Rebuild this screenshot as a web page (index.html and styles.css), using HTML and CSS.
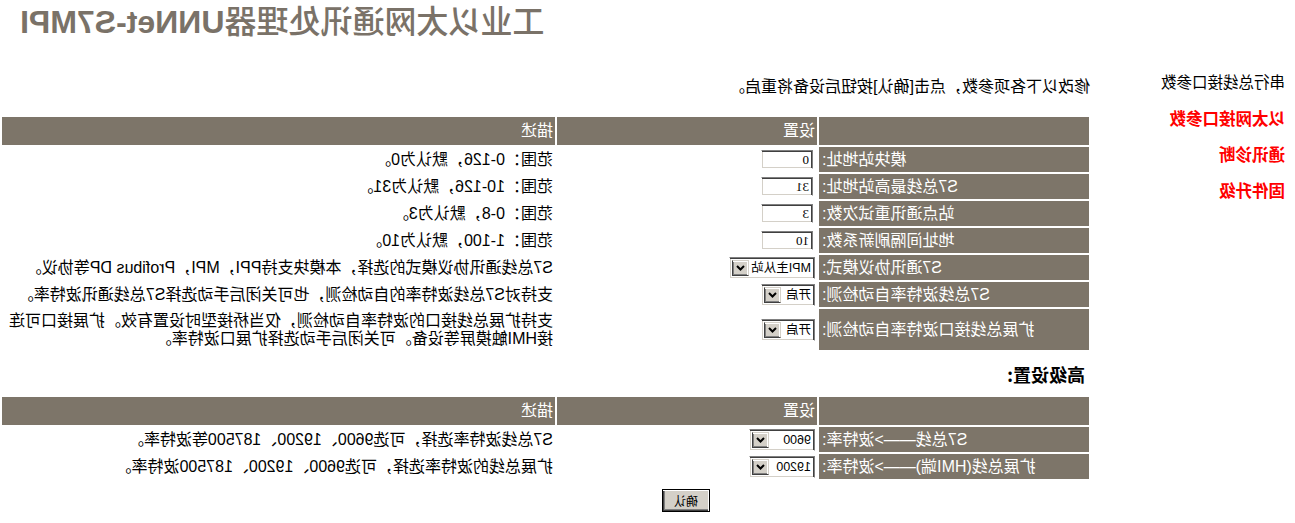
FILE: index.html
```html
<!DOCTYPE html>
<html lang="zh-CN">
<head>
<meta charset="utf-8">
<title>工业以太网通讯处理器UNNet-S7MPI</title>
<link rel="stylesheet" href="styles.css">
</head>
<body>
<div class="page">
  <header class="top">
    <h1 class="title"><span class="title-cn">工业以太网通讯处理器</span>UNNet-S7MPI</h1>
  </header>
  <div class="main">
    <nav class="side">
      <a class="side-item plain">串行总线接口参数</a>
      <a class="side-item active">以太网接口参数</a>
      <a class="side-item active">通讯诊断</a>
      <a class="side-item active">固件升级</a>
    </nav>
    <section class="content">
      <p class="intro">修改以下各项参数，点击[确认]按钮后设备将重启。</p>
      <table class="grid">
        <colgroup><col class="c-label"><col class="c-set"><col class="c-desc"></colgroup>
        <tr class="head"><th></th><th>设置</th><th>描述</th></tr>
        <tr><td class="lab">模块站地址:</td><td class="set"><input class="txt" value="0"></td><td class="desc">范围：0-126，默认为0。</td></tr>
        <tr><td class="lab">S7总线最高站地址:</td><td class="set"><input class="txt" value="31"></td><td class="desc">范围：10-126，默认为31。</td></tr>
        <tr><td class="lab">站点通讯重试次数:</td><td class="set"><input class="txt" value="3"></td><td class="desc">范围：0-8，默认为3。</td></tr>
        <tr><td class="lab">地址间隔刷新系数:</td><td class="set"><input class="txt" value="10"></td><td class="desc">范围：1-100，默认为10。</td></tr>
        <tr><td class="lab">S7通讯协议模式:</td><td class="set"><span class="sel w-mpi"><select><option>MPI主从站</option></select><span class="arr"><svg width="9" height="6" viewBox="0 0 9 6"><path d="M1 1 L4.5 4.5 L8 1" fill="none" stroke="#000" stroke-width="2"/></svg></span></span></td><td class="desc">S7总线通讯协议模式的选择，本模块支持PPI，MPI，Profibus DP等协议。</td></tr>
        <tr><td class="lab">S7总线波特率自动检测:</td><td class="set"><span class="sel w-on"><select><option>开启</option></select><span class="arr"><svg width="9" height="6" viewBox="0 0 9 6"><path d="M1 1 L4.5 4.5 L8 1" fill="none" stroke="#000" stroke-width="2"/></svg></span></span></td><td class="desc">支持对S7总线波特率的自动检测，也可关闭后手动选择S7总线通讯波特率。</td></tr>
        <tr class="tall"><td class="lab">扩展总线接口波特率自动检测:</td><td class="set"><span class="sel w-on"><select><option>开启</option></select><span class="arr"><svg width="9" height="6" viewBox="0 0 9 6"><path d="M1 1 L4.5 4.5 L8 1" fill="none" stroke="#000" stroke-width="2"/></svg></span></span></td><td class="desc">支持扩展总线接口的波特率自动检测，仅当桥接型时设置有效。扩展接口可连<br>接HMI触摸屏等设备。可关闭后手动选择扩展口波特率。</td></tr>
      </table>
      <h2 class="adv">高级设置:</h2>
      <table class="grid">
        <colgroup><col class="c-label"><col class="c-set"><col class="c-desc"></colgroup>
        <tr class="head"><th></th><th>设置</th><th>描述</th></tr>
        <tr><td class="lab">S7总线——&gt;波特率:</td><td class="set"><span class="sel w-baud"><select><option>9600</option></select><span class="arr"><svg width="9" height="6" viewBox="0 0 9 6"><path d="M1 1 L4.5 4.5 L8 1" fill="none" stroke="#000" stroke-width="2"/></svg></span></span></td><td class="desc">S7总线波特率选择，可选9600、19200、187500等波特率。</td></tr>
        <tr><td class="lab">扩展总线(HMI端)——&gt;波特率:</td><td class="set"><span class="sel w-baud"><select><option>19200</option></select><span class="arr"><svg width="9" height="6" viewBox="0 0 9 6"><path d="M1 1 L4.5 4.5 L8 1" fill="none" stroke="#000" stroke-width="2"/></svg></span></span></td><td class="desc">扩展总线的波特率选择，可选9600、19200、187500波特率。</td></tr>
      </table>
      <div class="actions"><button class="btn" type="button">确认</button></div>
    </section>
  </div>
</div>
</body>
</html>
```
FILE: styles.css
```css
html, body {
  margin: 0;
  padding: 0;
  background: #fff;
}
body {
  font-family: "Liberation Sans", "Noto Sans CJK SC", sans-serif;
  font-size: 16px;
  color: #000;
  overflow: hidden;
}
.page {
  width: 1295px;
  height: 523px;
  transform: scaleX(-1);
  transform-origin: center;
}
.top {
  height: 60px;
  display: flex;
  justify-content: flex-end;
  padding-right: 20px;
  box-sizing: border-box;
}
.title {
  margin: 0;
  padding-top: 2px;
  font-family: "Liberation Sans", "Noto Sans CJK SC", sans-serif;
  font-size: 32px;
  line-height: 40px;
  font-weight: bold;
  color: #7a7268;
}
.title-cn {
  font-weight: 500;
}
.main {
  display: flex;
}
.side {
  width: 204px;
  flex: none;
  box-sizing: border-box;
  padding: 13px 0 0 10px;
  display: flex;
  flex-direction: column;
  gap: 16px;
}
.side-item {
  line-height: 20px;
  white-space: nowrap;
  font-size: 15.5px;
}
.side-item.plain {
  color: #000;
}
.side-item.active {
  color: #ff0000;
  font-weight: bold;
  font-size: 16.5px;
}
.content {
  width: 1091px;
  flex: none;
}
.intro {
  margin: 17px 0 18px 1px;
  line-height: 20px;
}
.grid {
  border-collapse: separate;
  border-spacing: 2px;
  table-layout: fixed;
  width: 1091px;
}
.c-label { width: 270px; }
.c-set { width: 260px; }
.c-desc { width: 553px; }
.grid th, .grid td {
  padding: 0;
  line-height: 18px;
}
.head th {
  height: 28px;
  background: #7d7569;
  color: #fff;
  font-weight: normal;
  text-align: left;
  padding-left: 2px;
}
.grid tr td {
  height: 25px;
}
.grid tr.tall td {
  height: 41px;
}
.lab {
  background: #7d7569;
  color: #fff;
  text-align: right;
  padding-right: 3px !important;
  white-space: nowrap;
}
.set {
  padding-left: 2px !important;
}
.desc {
  padding-left: 2px !important;
  white-space: nowrap;
}
.txt {
  display: block;
  width: 52px;
  height: 19px;
  box-sizing: border-box;
  margin-left: 2px;
  border: 1px solid;
  border-color: #808080 #ffffff #ffffff #808080;
  box-shadow: inset 1px 1px 0 #404040, inset -1px -1px 0 #d4d0c8;
  padding: 0 3px;
  font-family: "Liberation Serif", serif;
  font-size: 13px;
  background: #fff;
  color: #000;
  outline: none;
}
.sel {
  display: flex;
  height: 22px;
  box-sizing: border-box;
  border: 1px solid;
  border-color: #808080 #ffffff #ffffff #808080;
  box-shadow: inset 1px 1px 0 #404040, inset -1px -1px 0 #d4d0c8;
  padding: 2px;
  background: #fff;
}
.sel select {
  appearance: none;
  -webkit-appearance: none;
  border: none;
  background: #fff;
  flex: 1;
  min-width: 0;
  padding: 0 0 0 1px;
  margin: 0;
  font-family: "Liberation Sans", "Noto Sans CJK SC", sans-serif;
  font-size: 12.5px;
  line-height: 16px;
  height: 16px;
  color: #000;
  outline: none;
}
.arr {
  width: 17px;
  height: 16px;
  flex: none;
  box-sizing: border-box;
  background: #d4d0c8;
  border: 1px solid;
  border-color: #d4d0c8 #404040 #404040 #d4d0c8;
  box-shadow: inset 1px 1px 0 #fff, inset -1px -1px 0 #808080;
  display: flex;
  align-items: center;
  justify-content: center;
}
.w-mpi { width: 86px; }
.w-on { width: 54px; }
.w-baud { width: 66px; }
.adv {
  margin: 10px 0 9px 6px;
  font-family: "Noto Sans CJK SC", sans-serif;
  font-size: 18px;
  line-height: 24px;
  font-weight: bold;
}
.actions {
  padding: 8px 0 0 381px;
}
.btn {
  width: 48px;
  height: 23px;
  box-sizing: border-box;
  background: #d4d0c8;
  border: 1px solid #000;
  box-shadow: inset 1px 1px 0 #fff, inset -1px -1px 0 #404040, inset -2px -2px 0 #808080;
  font-family: "Noto Sans CJK SC", sans-serif;
  font-size: 12px;
  line-height: 18px;
  padding: 0;
  color: #000;
}
```
